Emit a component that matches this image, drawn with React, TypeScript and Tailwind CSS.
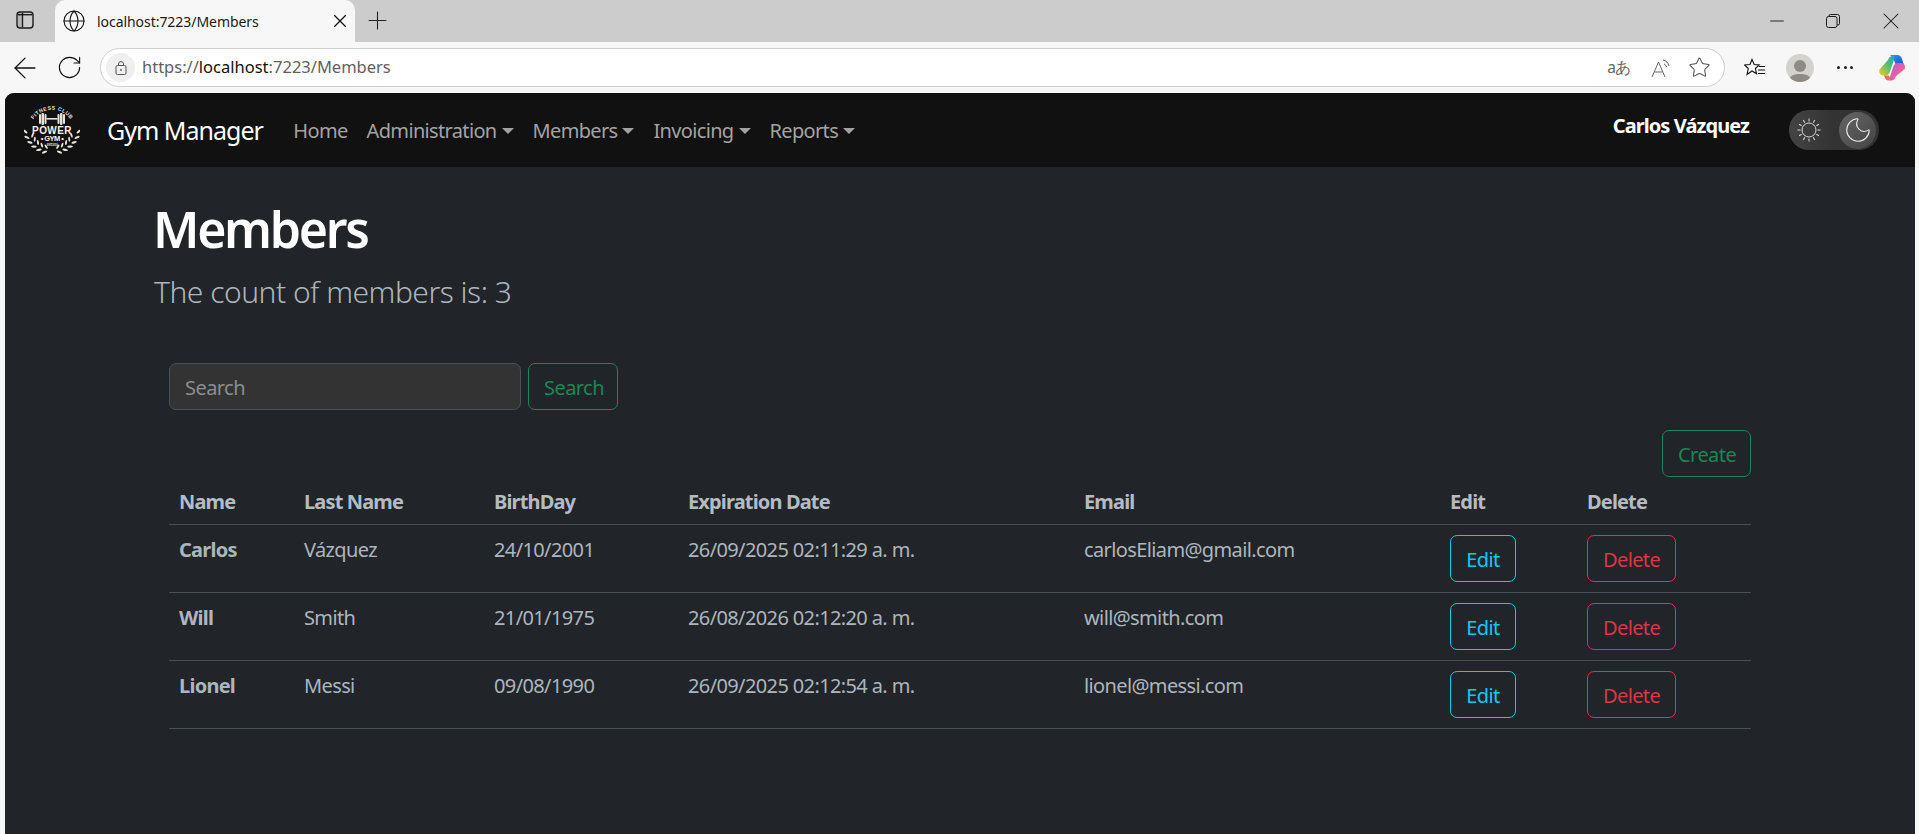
import React from 'react';
import { ArrowLeft, Globe, Minus, Moon, Plus, RotateCw, Star, X } from 'lucide-react';

const members = [
  { name: 'Carlos', last: 'Vázquez', birth: '24/10/2001', exp: '26/09/2025 02:11:29 a. m.', email: 'carlosEliam@gmail.com' },
  { name: 'Will', last: 'Smith', birth: '21/01/1975', exp: '26/08/2026 02:12:20 a. m.', email: 'will@smith.com' },
  { name: 'Lionel', last: 'Messi', birth: '09/08/1990', exp: '26/09/2025 02:12:54 a. m.', email: 'lionel@messi.com' },
];

const columns = [
  { label: 'Name', width: 'w-[125px]' },
  { label: 'Last Name', width: 'w-[190px]' },
  { label: 'BirthDay', width: 'w-[194px]' },
  { label: 'Expiration Date', width: 'w-[396px]' },
  { label: 'Email', width: 'w-[366px]' },
  { label: 'Edit', width: 'w-[137px]' },
  { label: 'Delete', width: 'w-[174px]' },
];

const navItems = [
  { label: 'Home', caret: false },
  { label: 'Administration', caret: true },
  { label: 'Members', caret: true },
  { label: 'Invoicing', caret: true },
  { label: 'Reports', caret: true },
];

// leaves of one laurel branch, placed along an arc round the logo's centre
const leafAngles = [172, 158, 145, 132, 119, 106];

const Laurel: React.FC<{ flip?: boolean }> = ({ flip }) => (
  <g transform={flip ? 'translate(56 0) scale(-1 1)' : undefined} fill="#e8e4da">
    {leafAngles.map((a) => {
      const rad = (a * Math.PI) / 180;
      const outerX = 28 + 27 * Math.cos(rad);
      const outerY = 24 + 25 * Math.sin(rad);
      const innerX = 28 + 21 * Math.cos(rad);
      const innerY = 24 + 19.500 * Math.sin(rad);
      return (
        <g key={a}>
          <ellipse cx={outerX} cy={outerY} rx="2.800" ry="1.100" transform={`rotate(${a + 50} ${outerX} ${outerY})`} />
          {a < 165 && (
            <ellipse cx={innerX} cy={innerY} rx="2.500" ry="1" transform={`rotate(${a + 130} ${innerX} ${innerY})`} />
          )}
        </g>
      );
    })}
  </g>
);

const GymLogo: React.FC = () => (
  <svg width="56" height="52" viewBox="0 0 56 52" className="shrink-0">
    <defs>
      <path id="logo-arc" d="M8 18 A22.400 22.400 0 0 1 48 18" />
    </defs>
    <text fontSize="5.200" fontWeight="700" fill="#e8e4da" letterSpacing="0.5" textAnchor="middle" fontFamily="'Liberation Sans', sans-serif">
      <textPath href="#logo-arc" startOffset="50%">FITNESS CLUB</textPath>
    </text>
    <g fill="#e8e4da">
      <rect x="15" y="10" width="2" height="10" rx="1" />
      <rect x="17.500" y="9" width="2.500" height="12" rx="1" />
      <rect x="20.500" y="10" width="2" height="10" rx="1" />
      <rect x="22.500" y="14" width="11" height="1.600" />
      <rect x="33.500" y="10" width="2" height="10" rx="1" />
      <rect x="36" y="9" width="2.500" height="12" rx="1" />
      <rect x="39" y="10" width="2" height="10" rx="1" />
    </g>
    <text x="28" y="30" textAnchor="middle" fontSize="10" fontWeight="700" letterSpacing="0.4" fill="#f4f1ea" fontFamily="'Liberation Sans', sans-serif">POWER</text>
    <text x="28" y="37" textAnchor="middle" fontSize="7.500" fontWeight="700" fill="#f4f1ea" fontFamily="'Liberation Sans', sans-serif">• GYM •</text>
    <text x="28" y="42" textAnchor="middle" fontSize="3" fontWeight="700" fill="#cfcbc2" fontFamily="'Liberation Sans', sans-serif">ESTD 2019</text>
    <Laurel />
    <Laurel flip />
  </svg>
);

const sunRays = [0, 30, 60, 90, 120, 150, 180, 210, 240, 270, 300, 330];

const SunIcon: React.FC = () => (
  <svg width="24" height="24" viewBox="0 0 24 24" fill="none" stroke="#d8d8d8" strokeWidth="1">
    <circle cx="12" cy="12" r="7" />
    {sunRays.map((a) => (
      <path key={a} d="M12 0.500 V3.500" transform={`rotate(${a} 12 12)`} />
    ))}
  </svg>
);

const CopilotIcon: React.FC = () => (
  <svg width="28" height="28" viewBox="0 0 28 28">
    <defs>
      <linearGradient id="cp-a" x1="0" y1="0" x2="1" y2="1">
        <stop offset="0" stopColor="#2e9bf0" />
        <stop offset="1" stopColor="#1d4fd8" />
      </linearGradient>
      <linearGradient id="cp-b" x1="0" y1="1" x2="1" y2="0">
        <stop offset="0" stopColor="#f7c62f" />
        <stop offset="0.55" stopColor="#4fc46a" />
        <stop offset="1" stopColor="#27a2c9" />
      </linearGradient>
      <linearGradient id="cp-c" x1="0" y1="0" x2="1" y2="1">
        <stop offset="0" stopColor="#b25ce8" />
        <stop offset="0.6" stopColor="#ef5f98" />
        <stop offset="1" stopColor="#f6883f" />
      </linearGradient>
    </defs>
    <path d="M11 1 h7 c3 0 4 1.500 5 4 l1.500 5 h-8 l-2 -5 c-.5 -1.500 -1.500 -2 -3.500 -4z" fill="url(#cp-a)" />
    <path d="M9 6 c1 -3 2.500 -4 5 -4 c1.500 .5 1.500 2.500 .8 4.500 l-3.800 11 c-1 3 -2.500 4 -5 4 h-2 c-3 0 -4.500 -3 -3.500 -6z" fill="url(#cp-b)" />
    <path d="M17 22 c-1 3 -2.500 4.500 -5 4.500 c-1.500 -.5 -1.500 -2.500 -.8 -4.500 l3 -9 c1 -3 2.500 -4 5 -4 h3 c3 0 4.500 3 3.500 6z" fill="url(#cp-c)" />
    <path d="M5 21.500 h5 l2 5 h4.500 h-7 c-2 0 -3.500 -1.500 -4.500 -5z" fill="#ef6a5a" />
  </svg>
);

const BrowserChrome: React.FC = () => (
  <div className="tracking-normal">
    <div className="flex h-[42px] bg-[#cccccc]">
      <div className="flex w-[55px] items-center justify-center pb-[2px] pr-[5px]">
        <svg width="18" height="18" viewBox="0 0 18 18" fill="none" stroke="#1a1a1a" strokeWidth="1.400">
          <rect x="1" y="1" width="16" height="16" rx="3" />
          <path d="M6.500 1.500 v15" />
          <path d="M2 2 h4 v14 h-4z" fill="#1a1a1a" opacity="0.12" stroke="none" />
          <path d="M2 3 h14 v1.400 h-14z" fill="#1a1a1a" stroke="none" />
        </svg>
      </div>
      <div className="flex h-[42px] w-[300px] items-center rounded-t-[10px] bg-[#f7f7f7] pl-[7px] pr-[4px] text-[14px] tracking-[-0.05px] text-[#1a1a1a]">
        <Globe size={24} strokeWidth={1.1} className="text-[#111]" />
        <span className="ml-[11px] flex-1">localhost:7223/Members</span>
        <X size={22} strokeWidth={1.300} className="text-[#111]" />
      </div>
      <div className="flex w-[44px] items-center justify-center pb-[2px]">
        <Plus size={29} strokeWidth={0.9} className="text-[#222]" />
      </div>
      <div className="flex-1" />
      <div className="flex items-center pb-[1px] pr-[14px] text-[#1a1a1a]">
        <Minus size={22} strokeWidth={1} />
        <svg width="14" height="14" viewBox="0 0 14 14" fill="none" stroke="#1a1a1a" strokeWidth="1" className="ml-[38px]">
          <rect x="0.500" y="2.500" width="10.500" height="11" rx="2" />
          <path d="M3 2.500 v-.500 a1.500 1.500 0 0 1 1.500 -1.500 h7 a2 2 0 0 1 2 2 v7 a1.500 1.500 0 0 1 -1.500 1.500 h-1" />
        </svg>
        <X size={28} strokeWidth={0.9} className="ml-[37px]" />
      </div>
    </div>
    <div className="flex h-[51px] items-center bg-[#f7f7f7]">
      <div className="flex w-[42px] justify-end">
        <ArrowLeft size={34} strokeWidth={0.9} className="text-[#111]" />
      </div>
      <div className="ml-[14px] flex w-[27px] justify-center">
        <RotateCw size={27} strokeWidth={1} className="text-[#111]" />
      </div>
      <div className="ml-[17px] flex h-[39px] w-[1625px] items-center rounded-full border border-[#cfcfcf] bg-white pl-[5px] pr-[13px] text-[16.500px] text-[#5f5f5f]">
        <div className="flex h-[29px] w-[29px] items-center justify-center rounded-full bg-[#efefef]">
          <svg width="12" height="14" viewBox="0 0 12 14" fill="none" stroke="#555" strokeWidth="1">
            <rect x="1" y="4.500" width="10" height="9" rx="1.500" />
            <path d="M3.500 4.500 v-1.500 a2.500 2.500 0 0 1 5 0 v1.500" />
            <circle cx="6" cy="9" r="0.900" fill="#555" stroke="none" />
          </svg>
        </div>
        <span className="ml-[7px]">
          https://<span className="text-[#111]">localhost</span>:7223/Members
        </span>
        <div className="flex-1" />
        <span className="text-[15.500px] tracking-[-1px] text-[#666]">aあ</span>
        <svg width="22" height="20" viewBox="0 0 22 20" fill="none" stroke="#666" strokeWidth="1" className="ml-[21px]">
          <path d="M1 19 L7.500 4 L14 19 M3.500 14 h8" />
          <path d="M12 2 c3 .5 5 2.500 6 6 M13 6 c1.500 .5 2 1.500 2.500 3" />
        </svg>
        <Star size={23} strokeWidth={1.100} className="ml-[15px] text-[#555]" />
      </div>
      <svg width="22" height="20" viewBox="0 0 22 20" fill="none" stroke="#111" strokeWidth="1.100" className="ml-[19px]">
        <path d="M8 1.500 l2.200 5 l5 .5 l-3.800 3.500 l1.100 5.200 l-4.500 -2.700 l-5 3.500 l1.300 -6 l-3.800 -3.500 l5.500 -.5z" />
        <path d="M15 8.500 h6 M14 12 h7 M14 15.500 h7" />
      </svg>
      <div className="ml-[20px] flex h-[28px] w-[28px] items-end justify-center overflow-hidden rounded-full bg-[#d4d2cd]">
        <svg width="22" height="24" viewBox="0 0 22 24" fill="#8e8b87">
          <circle cx="11" cy="8" r="6" />
          <path d="M0 24 c0 -6 4 -8 11 -8 c7 0 11 2 11 8z" />
        </svg>
      </div>
      <div className="ml-[23px] flex w-[16px] justify-between">
        <span className="h-[3px] w-[3px] rounded-full bg-[#222]" />
        <span className="h-[3px] w-[3px] rounded-full bg-[#222]" />
        <span className="h-[3px] w-[3px] rounded-full bg-[#222]" />
      </div>
      <div className="ml-[26px]">
        <CopilotIcon />
      </div>
    </div>
  </div>
);

const Navbar: React.FC = () => (
  <nav className="flex h-[74px] items-center rounded-t-[9px] bg-[#111111] pl-[19px]">
    <GymLogo />
    <a className="ml-[27px] text-[25px] leading-none tracking-[-1px] text-white">Gym Manager</a>
    <ul className="ml-[21px] flex items-center pt-[1px] text-[20px] tracking-[-0.66px] text-[#a3a3a3]">
      {navItems.map((item) => (
        <li key={item.label} className="flex items-center px-[9.500px]">
          {item.label}
          {item.caret && (
            <span className="ml-[5px] h-0 w-0 border-x-[6px] border-t-[6px] border-x-transparent border-t-[#a3a3a3]" />
          )}
        </li>
      ))}
    </ul>
    <div className="flex-1" />
    <span className="mb-[8px] text-[20px] font-bold tracking-[-0.92px] text-white">Carlos Vázquez</span>
    <div className="ml-[40px] mr-[36px] flex h-[40px] w-[90px] items-center justify-between rounded-full bg-gradient-to-r from-[#444444] via-[#333333] to-[#333333] pl-[8px] pr-[3px]">
      <SunIcon />
      <div className="flex h-[37px] w-[37px] items-center justify-center rounded-full bg-gradient-to-br from-[#666666] to-[#444444]">
        <Moon size={30} strokeWidth={0.9} className="text-[#e5e5e5]" />
      </div>
    </div>
  </nav>
);

const OutlineButton: React.FC<{ className: string; children: React.ReactNode }> = ({ className, children }) => (
  <button className={`h-[47px] rounded-[7px] border px-[15px] pt-[2px] text-[20px] ${className}`}>{children}</button>
);

const MembersTable: React.FC = () => (
  <table className="w-[1582px] table-fixed border-collapse text-left text-[20px] leading-[30px] tracking-[-0.62px] text-[#adb5bd]">
    <colgroup>
      {columns.map((c) => (
        <col key={c.label} className={c.width} />
      ))}
    </colgroup>
    <thead>
      <tr className="border-b border-[#495057]">
        {columns.map((c) => (
          <th key={c.label} className="px-[10px] pb-[7px] pt-[10px] font-bold tracking-[-0.85px] text-[#b4bbc2]">{c.label}</th>
        ))}
      </tr>
    </thead>
    <tbody>
      {members.map((m) => (
        <tr key={m.email} className="border-b border-[#495057] align-top">
          <td className="p-[10px] font-bold tracking-[-0.75px]">{m.name}</td>
          <td className="p-[10px]">{m.last}</td>
          <td className="p-[10px]">{m.birth}</td>
          <td className="p-[10px]">{m.exp}</td>
          <td className="p-[10px]">{m.email}</td>
          <td className="p-[10px]">
            <OutlineButton className="w-[66px] border-[#0dcaf0] text-[#0dcaf0]">Edit</OutlineButton>
          </td>
          <td className="p-[10px]">
            <OutlineButton className="w-[89px] border-[#dc3545] text-[#dc3545]">Delete</OutlineButton>
          </td>
        </tr>
      ))}
    </tbody>
  </table>
);

const App: React.FC = () => (
  <div className="h-[834px] w-full overflow-hidden bg-[#f7f7f7] font-['Noto_Sans','Open_Sans',sans-serif] tracking-[-0.56px]">
    <BrowserChrome />
    <div className="ml-[5px] mr-[4px] h-[741px] rounded-t-[9px] bg-[#212529]">
      <Navbar />
      <main className="pl-[148px] pt-[32px]">
        <h1 className="text-[50px] font-semibold leading-[60px] tracking-[-2.3px] text-white">Members</h1>
        <p className="ml-[1px] mt-[14px] text-[30px] font-light leading-[37px] tracking-[-0.5px] text-[#adb5bd]">The count of members is: 3</p>
        <div className="ml-[16px] mt-[53px] w-[1582px]">
          <div className="flex gap-[7px]">
            <input
              placeholder="Search"
              className="h-[47px] w-[352px] rounded-[7px] border border-[#495057] bg-[#333333] px-[15px] pt-[2px] text-[20px] outline-none placeholder:text-[#8a8d90]"
            />
            <OutlineButton className="w-[90px] border-[#198754] text-[#198754]">Search</OutlineButton>
          </div>
          <div className="mt-[20px] flex justify-end">
            <OutlineButton className="w-[89px] border-[#198754] text-[#198754]">Create</OutlineButton>
          </div>
          <MembersTable />
        </div>
      </main>
    </div>
  </div>
);

export default App;
